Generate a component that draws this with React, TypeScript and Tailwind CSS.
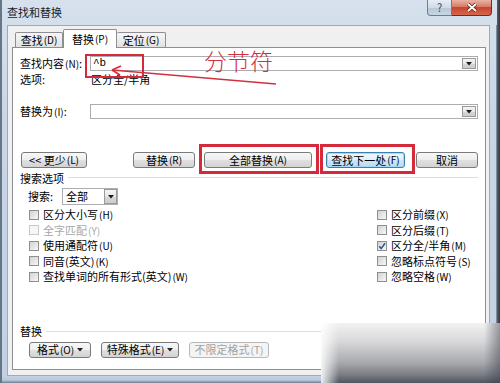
import React from "react";

type BtnProps = { cls: string; variant?: "normal" | "default" | "disabled"; children: React.ReactNode };

function Btn({ cls, variant = "normal", children }: BtnProps) {
  const base =
    "h-[16px] shrink-0 flex items-center justify-center rounded-[3px] border text-[11px] leading-none whitespace-nowrap";
  const v =
    variant === "default"
      ? "border-[#3c7fb1] bg-[linear-gradient(#eef7fd_0%,#dff1fc_50%,#c9e8fb_51%,#b5ddf6_100%)] text-black shadow-[inset_0_0_0_1px_#a8d8f5]"
      : variant === "disabled"
      ? "border-[#b5b9bc] bg-[#f4f4f4] text-[#a3a3a3]"
      : "border-[#7a7a7a] bg-[linear-gradient(#f7f7f7_0%,#eeeeee_50%,#e0e0e0_51%,#d3d3d3_100%)] text-black";
  return <div className={`${base} ${v} ${cls}`}>{children}</div>;
}

function Arrow() {
  return (
    <svg width="6" height="4" viewBox="0 0 6 4" className="ml-[3px]">
      <path d="M0 0 L6 0 L3 3.5 Z" fill="#222" />
    </svg>
  );
}

function DropBtn({ cls }: { cls: string }) {
  return (
    <div
      className={`shrink-0 flex items-center justify-center border border-[#9a9a9a] bg-[linear-gradient(#f4f4f4_0%,#e6e6e6_50%,#d6d6d6_51%,#cdcdcd_100%)] ${cls}`}
    >
      <svg width="6" height="4" viewBox="0 0 6 4">
        <path d="M0 0 L6 0 L3 3.5 Z" fill="#1a1a1a" />
      </svg>
    </div>
  );
}

function CB({ checked = false, disabled = false }: { checked?: boolean; disabled?: boolean }) {
  return (
    <div
      className={`w-[10px] h-[10px] shrink-0 flex items-center justify-center border ${
        disabled
          ? "border-[#c9c9c9] bg-[#f6f6f6]"
          : "border-[#8f8f8f] bg-[linear-gradient(135deg,#d2d2d2,#f7f7f7)]"
      }`}
    >
      {checked && (
        <svg width="8" height="8" viewBox="0 0 8 8">
          <path d="M1.2 4.2 L3.2 6.6 L7 1.2" stroke="#35508f" strokeWidth="1.5" fill="none" />
        </svg>
      )}
    </div>
  );
}

function CRow({ label, checked, disabled }: { label: React.ReactNode; checked?: boolean; disabled?: boolean }) {
  return (
    <div className="h-[15.5px] flex items-center gap-[4px]">
      <CB checked={checked} disabled={disabled} />
      <span className={`text-[11px] leading-none whitespace-nowrap ${disabled ? "text-[#a8a8a8]" : "text-black"}`}>
        {label}
      </span>
    </div>
  );
}

function M({ k }: { k: string }) {
  return <span className="text-[10px] ml-[1px]">({k})</span>;
}

export default function App() {
  return (
    <div className="relative w-[500px] h-[383px] overflow-hidden flex bg-[#3a4350] font-['Noto_Sans_CJK_SC','Noto_Sans',sans-serif]">
      {/* window */}
      <div className="w-[497px] h-full flex flex-col border-l-2 border-[#667587] bg-[linear-gradient(#d6e1ed_0%,#c8d6e6_30%,#c2d2e3_100%)]">
        {/* title bar */}
        <div className="h-[25px] flex items-start justify-between">
          <div className="pl-[5px] pt-[7px] text-[11px] leading-none text-[#1c1c1c]">查找和替换</div>
          <div className="flex mr-[5px]">
            <div className="w-[25px] h-[16px] flex items-center justify-center rounded-bl-[4px] border border-t-0 border-[#6c7d92] bg-[linear-gradient(#e6edf5_0%,#cfdbe8_50%,#b6c6d8_51%,#c9d6e4_100%)] text-[11px] leading-none text-[#34455c]">
              ?
            </div>
            <div className="w-[40px] h-[16px] flex items-center justify-center rounded-br-[4px] border border-t-0 border-l-0 border-[#6e2b22] bg-[linear-gradient(#eab2a6_0%,#d97a64_45%,#c7452c_50%,#d4684d_100%)]">
              <svg width="12" height="9" viewBox="0 0 12 9">
                <path d="M2 1 L10 8 M10 1 L2 8" stroke="#5a1c14" strokeWidth="3.2" />
                <path d="M2 1 L10 8 M10 1 L2 8" stroke="#ffffff" strokeWidth="1.8" />
              </svg>
            </div>
          </div>
        </div>

        {/* body */}
        <div className="flex-1 flex">
          <div className="w-[5px]" />
          {/* client */}
          <div className="w-[483px] flex flex-col border border-[#9aabbf] bg-[#f0f0f0] pl-[4px] pr-[3px] pt-[3px] pb-[5px]">
            {/* tabs */}
            <div className="h-[18px] flex items-end pl-[3px]">
              <div className="w-[48px] h-[15px] flex items-center justify-center border border-b-0 border-[#8c8e94] rounded-t-[2px] bg-[linear-gradient(#f6f6f6,#e2e2e2)] text-[11px] leading-none">
                查找<M k="D" />
              </div>
              <div className="relative z-10 w-[54px] h-[19px] -mb-px flex items-center justify-center border border-b-0 border-[#8c8e94] rounded-t-[2px] bg-white text-[11px] leading-none">
                替换<M k="P" />
              </div>
              <div className="w-[49px] h-[15px] flex items-center justify-center border border-b-0 border-l-0 border-[#8c8e94] rounded-t-[2px] bg-[linear-gradient(#f6f6f6,#e2e2e2)] text-[11px] leading-none">
                定位<M k="G" />
              </div>
            </div>

            {/* tab page */}
            <div className="flex-1 flex flex-col border border-[#8c8e94] bg-white pl-[7px] pr-[7px] pt-[8px] text-[11px] leading-none text-black">
              {/* find row */}
              <div className="h-[15px] flex items-center">
                <div className="w-[70px] shrink-0 whitespace-nowrap">
                  查找内容<M k="N" />:
                </div>
                <div className="flex-1 h-[15px] flex items-center justify-between border border-[#abadb3] bg-white">
                  <span className="pl-[2px] text-[11px] font-['Liberation_Mono',monospace]">^b</span>
                  <DropBtn cls="w-[14px] h-[11px] mr-px" />
                </div>
              </div>
              {/* options */}
              <div className="h-[16px] flex items-center">
                <div className="w-[71px] shrink-0">选项:</div>
                <div>区分全/半角</div>
              </div>
              {/* replace row */}
              <div className="mt-[17px] h-[15px] flex items-center">
                <div className="w-[70px] shrink-0 whitespace-nowrap">
                  替换为<M k="I" />:
                </div>
                <div className="flex-1 h-[15px] flex items-center justify-end border border-[#abadb3] bg-white">
                  <DropBtn cls="w-[14px] h-[11px] mr-px" />
                </div>
              </div>
              {/* buttons */}
              <div className="mt-[33px] h-[16px] flex">
                <Btn cls="ml-[1px] w-[66px]">
                  &lt;&lt; 更少<M k="L" />
                </Btn>
                <Btn cls="ml-[46px] w-[62px]">
                  替换 <M k="R" />
                </Btn>
                <Btn cls="ml-[9px] w-[108px]">
                  全部替换 <M k="A" />
                </Btn>
                <Btn cls="ml-[14px] w-[79px]" variant="default">
                  查找下一处 <M k="F" />
                </Btn>
                <Btn cls="ml-[11px] w-[62px]">取消</Btn>
              </div>
              {/* search options header */}
              <div className="mt-[3px] h-[14px] flex items-center">
                <span className="whitespace-nowrap">搜索选项</span>
                <div className="flex-1 ml-[4px] h-[2px] border-t border-[#d5dfe5] border-b border-b-white" />
              </div>
              {/* search select */}
              <div className="mt-[3px] h-[17px] flex items-center pl-[8px]">
                <div className="w-[34px] shrink-0">搜索:</div>
                <div className="w-[56px] h-[17px] flex items-center justify-between border border-[#abadb3] bg-white">
                  <span className="pl-[3px]">全部</span>
                  <DropBtn cls="w-[13px] h-[15px]" />
                </div>
              </div>
              {/* checkboxes */}
              <div className="mt-[2px] flex">
                <div className="ml-[9px] w-[348px] flex flex-col">
                  <CRow label={<>区分大小写<M k="H" /></>} />
                  <CRow label={<>全字匹配<M k="Y" /></>} disabled />
                  <CRow label={<>使用通配符<M k="U" /></>} />
                  <CRow label={<>同音(英文)<M k="K" /></>} />
                  <CRow label={<>查找单词的所有形式(英文)<M k="W" /></>} />
                </div>
                <div className="flex flex-col">
                  <CRow label={<>区分前缀<M k="X" /></>} />
                  <CRow label={<>区分后缀<M k="T" /></>} />
                  <CRow label={<>区分全/半角<M k="M" /></>} checked />
                  <CRow label={<>忽略标点符号<M k="S" /></>} />
                  <CRow label={<>忽略空格<M k="W" /></>} />
                </div>
              </div>
              {/* replace group */}
              <div className="mt-[40px] h-[14px] flex items-center">
                <span className="whitespace-nowrap">替换</span>
                <div className="flex-1 ml-[4px] h-[2px] border-t border-[#d5dfe5] border-b border-b-white" />
              </div>
              <div className="mt-[3px] h-[16px] flex">
                <Btn cls="ml-[9px] w-[62px]">
                  格式<M k="O" />
                  <Arrow />
                </Btn>
                <Btn cls="ml-[10px] w-[78px]">
                  特殊格式<M k="E" />
                  <Arrow />
                </Btn>
                <Btn cls="ml-[10px] w-[80px]" variant="disabled">
                  不限定格式<M k="T" />
                </Btn>
              </div>
            </div>
          </div>
          <div className="flex-1 border-r border-[#7d8b9c]" />
        </div>
        <div className="h-[7px] bg-[linear-gradient(#c3d3e4_0%,#b8c8da_60%,#6f7c8c_100%)]" />
      </div>
      <div className="flex-1 bg-[linear-gradient(90deg,#59606b,#2f3640)]" />

      {/* annotations */}
      <div className="absolute left-[85px] top-[54px] w-[59px] h-[24px] border-2 border-[#d42a3a]" />
      <div className="absolute left-[204px] top-[49px] text-[23px] leading-none font-light text-[#d3303f]">分节符</div>
      <svg className="absolute left-0 top-0" width="500" height="383" viewBox="0 0 500 383">
        <path d="M112 70 L276 84" stroke="#d3303f" strokeWidth="1.4" fill="none" />
        <path d="M112 70 L121 66 M112 70 L120 75" stroke="#d3303f" strokeWidth="1.6" fill="none" />
      </svg>
      <div className="absolute left-[199px] top-[144px] w-[120px] h-[30px] border-[3px] border-[#d42a3a]" />
      <div className="absolute left-[320px] top-[144px] w-[95px] h-[30px] border-[3px] border-[#d42a3a]" />

      {/* blurred overlay bottom-right */}
      <div className="absolute left-[321px] top-[323px] right-0 bottom-0 bg-[linear-gradient(#f2f2f2_0%,#d9d9db_30%,#a9abaf_65%,#7d8087_85%,#50555e_100%)]">
        <div className="absolute left-0 top-0 bottom-0 w-[18px] bg-[linear-gradient(90deg,rgba(255,255,255,0.9),rgba(255,255,255,0))]" />
        <div className="absolute right-0 top-0 bottom-0 w-[16px] bg-[linear-gradient(90deg,rgba(60,65,75,0),rgba(60,65,75,0.5))]" />
      </div>
    </div>
  );
}
